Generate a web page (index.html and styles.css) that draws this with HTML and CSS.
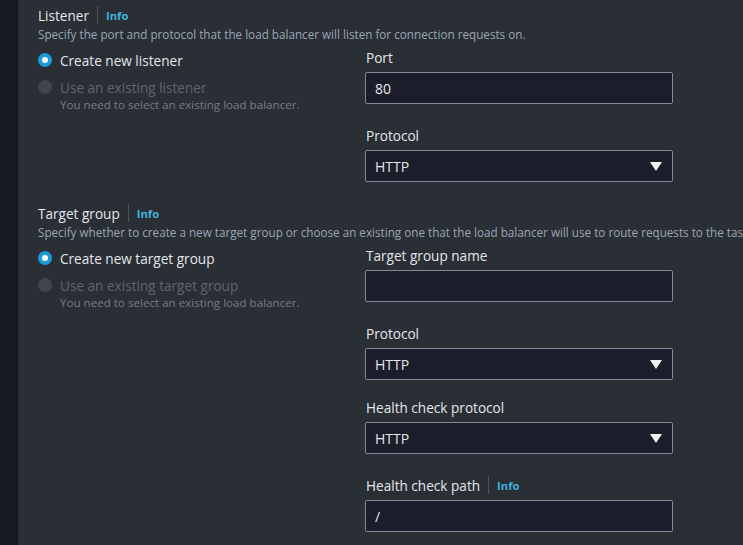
FILE: index.html
```html
<!DOCTYPE html>
<html>
<head>
<meta charset="utf-8">
<link rel="stylesheet" href="styles.css">
</head>
<body>
<div class="page">
  <aside class="rail"></aside>
  <main class="main">
    <section class="section listener">
      <div class="heading"><span class="title">Listener</span><span class="sep"></span><a class="info">Info</a></div>
      <div class="desc">Specify the port and protocol that the load balancer will listen for connection requests on.</div>
      <div class="cols">
        <div class="radios">
          <label class="radio checked"><span class="dot"></span><span class="rlabel">Create new listener</span></label>
          <label class="radio disabled"><span class="dot"></span><span class="rlabel">Use an existing listener</span></label>
          <div class="rhint">You need to select an existing load balancer.</div>
        </div>
        <div class="fields">
          <div class="field">
            <div class="flabel">Port</div>
            <div class="input">80</div>
          </div>
          <div class="field">
            <div class="flabel">Protocol</div>
            <div class="input select">HTTP<span class="caret"></span></div>
          </div>
        </div>
      </div>
    </section>
    <section class="section target">
      <div class="heading"><span class="title">Target group</span><span class="sep"></span><a class="info">Info</a></div>
      <div class="desc">Specify whether to create a new target group or choose an existing one that the load balancer will use to route requests to the tasks in your service.</div>
      <div class="cols">
        <div class="radios">
          <label class="radio checked"><span class="dot"></span><span class="rlabel">Create new target group</span></label>
          <label class="radio disabled"><span class="dot"></span><span class="rlabel">Use an existing target group</span></label>
          <div class="rhint">You need to select an existing load balancer.</div>
        </div>
        <div class="fields">
          <div class="field">
            <div class="flabel">Target group name</div>
            <div class="input"></div>
          </div>
          <div class="field">
            <div class="flabel">Protocol</div>
            <div class="input select">HTTP<span class="caret"></span></div>
          </div>
          <div class="field tight">
            <div class="flabel">Health check protocol</div>
            <div class="input select">HTTP<span class="caret"></span></div>
          </div>
          <div class="field">
            <div class="flabel"><span>Health check path</span><span class="sep"></span><a class="info">Info</a></div>
            <div class="input">/</div>
          </div>
        </div>
      </div>
    </section>
  </main>
</div>
</body>
</html>
```
FILE: styles.css
```css
html, body {
  margin: 0;
  padding: 0;
  background: #2a2e35;
  overflow: hidden;
}
body {
  font-family: "Open Sans", "Noto Sans", sans-serif;
  color: #d5dbdb;
  width: 743px;
  height: 545px;
}
.page {
  display: flex;
  height: 545px;
}
.rail {
  width: 17px;
  flex: none;
  background: #171921;
  border-right: 1px solid #121419;
}
.main {
  flex: 1;
  padding-left: 20px;
  white-space: nowrap;
  overflow: hidden;
}
.section {
  padding-top: 6px;
}
.target {
  padding-top: 22px;
}
.heading {
  display: flex;
  align-items: center;
  height: 18px;
  font-size: 13.6px;
}
.title {
  color: #e3e6ea;
}
.sep {
  width: 1px;
  height: 18px;
  background: #4b525c;
  margin: 0 8px 0 8px;
}
.info {
  color: #3fb3dd;
  font-weight: 700;
  font-size: 11.2px;
}
.desc {
  font-size: 11.7px;
  color: #9aa6b4;
  margin-top: 2px;
  height: 16px;
  line-height: 16px;
}
.cols {
  display: grid;
  grid-template-columns: 327px 308px;
  margin-top: 5px;
}
.radios {
  display: flex;
  flex-direction: column;
  padding-top: 4px;
}
.radio {
  display: flex;
  align-items: center;
  height: 18px;
  margin-bottom: 9px;
  font-size: 13.6px;
}
.dot {
  width: 14px;
  height: 14px;
  border-radius: 50%;
  box-sizing: border-box;
  margin-right: 8px;
  flex: none;
}
.checked .dot {
  background: #ffffff;
  border: 4px solid #1b9bd6;
}
.checked .rlabel {
  color: #e3e6ea;
}
.disabled .dot {
  background: #40454e;
}
.disabled .rlabel {
  color: #5e6672;
}
.rhint {
  font-size: 11.6px;
  color: #747d89;
  padding-left: 22px;
  margin-top: -8px;
  line-height: 16px;
}
.fields {
  display: flex;
  flex-direction: column;
  gap: 21px;
}
.field {
  display: flex;
  flex-direction: column;
}
.field.tight {
  margin-top: -4px;
}
.flabel {
  display: flex;
  align-items: center;
  font-size: 13.6px;
  color: #e3e6ea;
  height: 20px;
  padding-left: 1px;
  margin-bottom: 5px;
}
.flabel .sep {
  height: 18px;
}
.input {
  box-sizing: border-box;
  width: 308px;
  height: 32px;
  border: 1px solid #7f8b96;
  border-radius: 2px;
  background: #1b1e2a;
  color: #e3e6ea;
  font-size: 14px;
  padding: 0 9px;
  display: flex;
  align-items: center;
  position: relative;
}
.select .caret {
  position: absolute;
  right: 10px;
  top: 11px;
  width: 0;
  height: 0;
  border-left: 6px solid transparent;
  border-right: 6px solid transparent;
  border-top: 9px solid #eef0f2;
}
```
